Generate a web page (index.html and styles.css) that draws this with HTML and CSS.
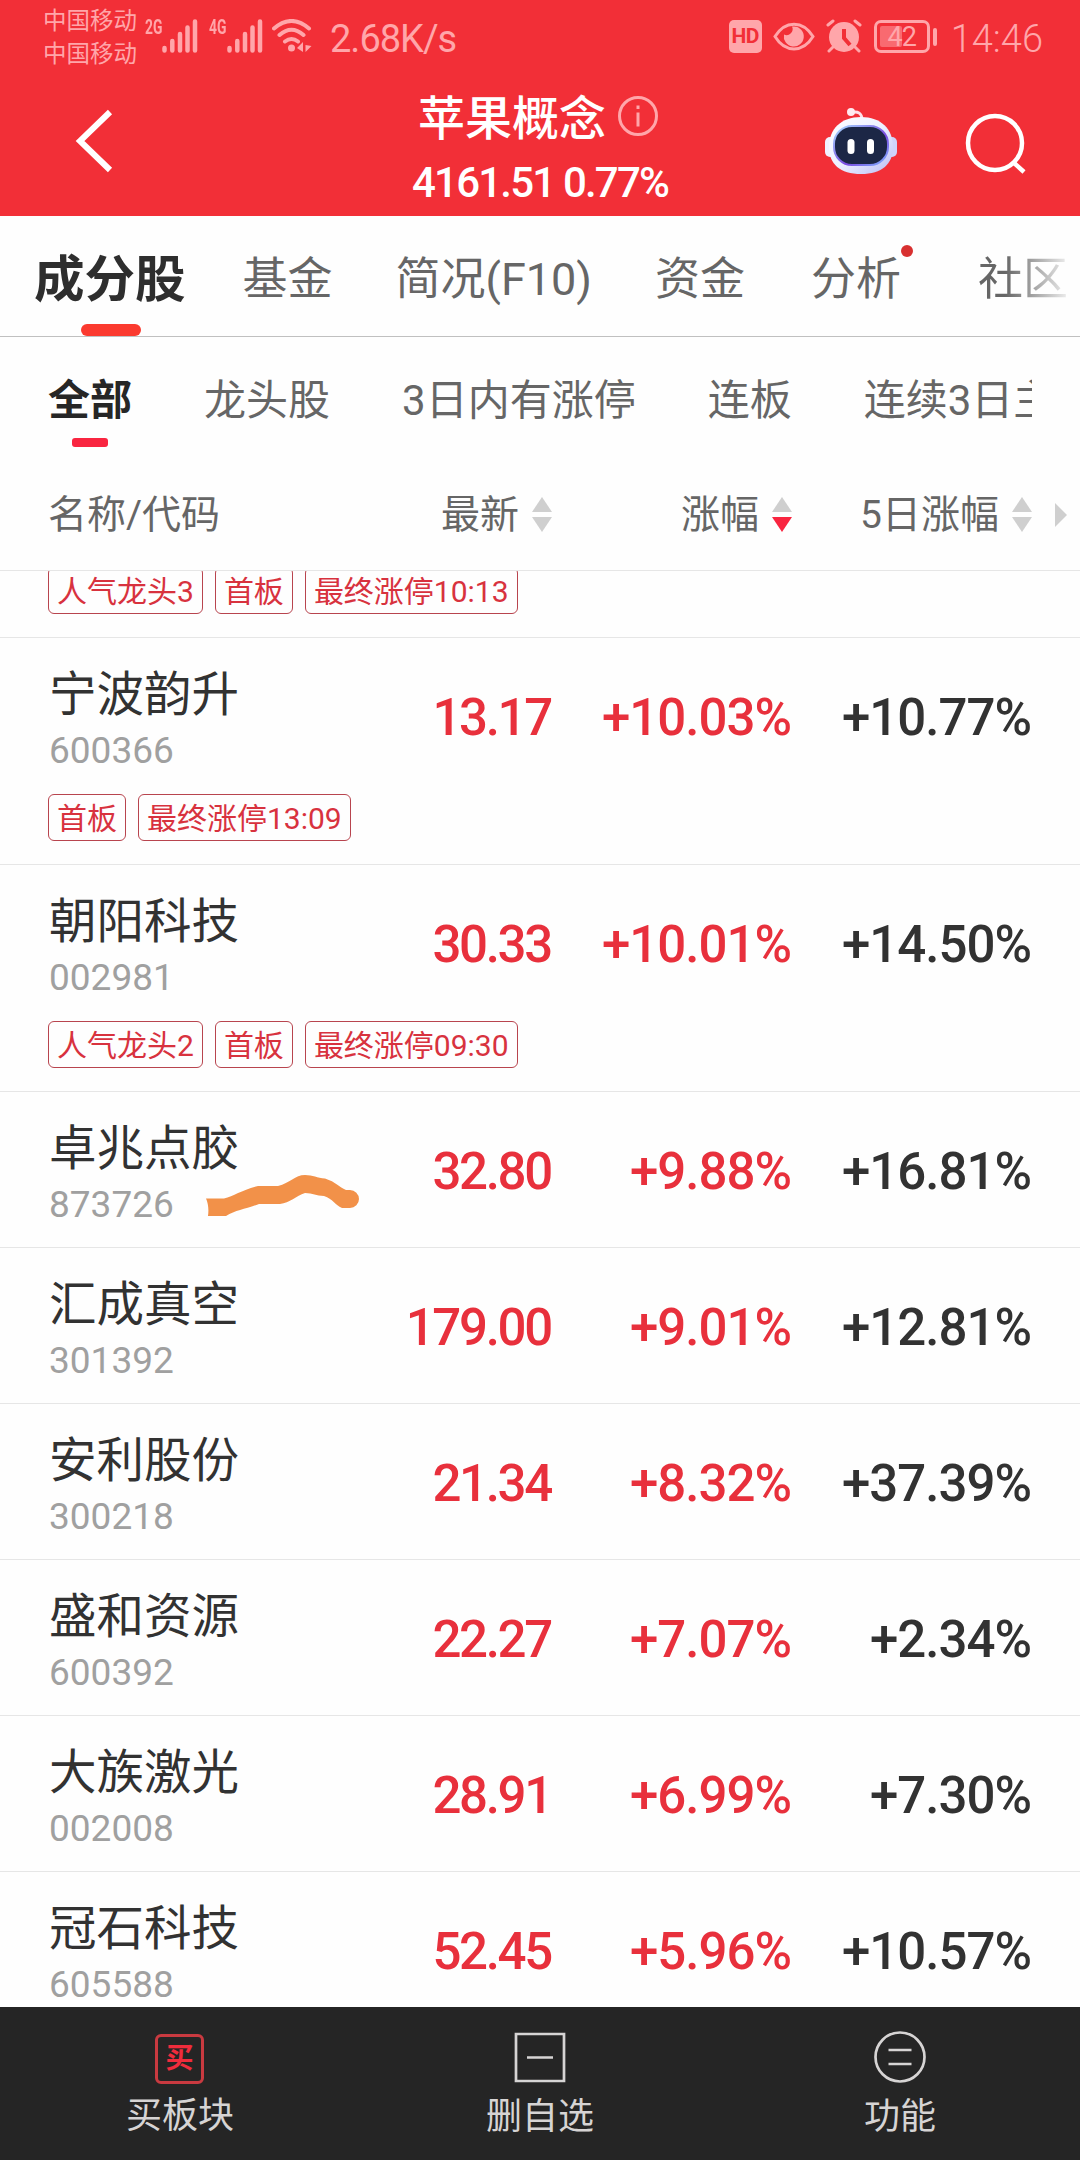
FILE: index.html
```html
<!DOCTYPE html>
<html lang="zh-CN">
<head>
    <meta charset="UTF-8">
    <title>苹果概念</title>
    <link rel="stylesheet" href="styles.css">
</head>
<body>
    <header class="top">
        <div class="status-bar">
            <div class="carriers">
                <span>中国移动</span>
                <span>中国移动</span>
            </div>
            <span class="net">2G</span>
            <svg class="signal" width="36" height="34" viewBox="0 0 36 34">
                <path d="M2.5 29v2.5M10.3 22v9.500M18 15v16.500M25.500 8.500v23M33 2.500v29"/>
            </svg>
            <span class="net net-4g">4G</span>
            <svg class="signal" width="36" height="34" viewBox="0 0 36 34">
                <path d="M2.5 29v2.5M10.3 22v9.500M18 15v16.500M25.500 8.500v23M33 2.500v29"/>
            </svg>
            <svg class="wifi" width="40" height="34" viewBox="0 0 40 34">
                <path class="arc" d="M2 9.500Q19.500-5.500 37 9.500M7.500 16Q19.500 5.500 31.500 16M13 22.500Q19.500 17.500 26 22.500"/>
                <circle cx="19.500" cy="29" r="3.500"/>
                <path d="M31 23v10l-6-4zM33.500 26v7l6-6z"/>
            </svg>
            <span class="speed">2.68K/s</span>
            <div class="status-right">
                <span class="hd">HD</span>
                <svg width="42" height="34" viewBox="0 0 42 34">
                    <path class="line" d="M2 17.500C12 1 30 1 40 17.500C30 34 12 34 2 17.500Z"/>
                    <path d="M21 7.500a10 10 0 1 1-10 8a6 6 0 0 0 8-8z"/>
                </svg>
                <svg width="36" height="34" viewBox="0 0 36 34">
                    <circle cx="18" cy="18" r="15"/>
                    <path class="line" d="M2 6l5-4M34 6l-5-4M7 28l-4 4M29 28l4 4"/>
                    <path class="hand" d="M18 10v9l6 7"/>
                </svg>
                <div class="battery"><span class="battery-fill"></span><b>42</b></div>
                <span class="battery-nub"></span>
                <span class="clock">14:46</span>
            </div>
        </div>
        <div class="nav-bar">
            <svg class="back" width="40" height="64" viewBox="0 0 40 64">
                <path d="M36 3L6 32L36 61"/>
            </svg>
            <div class="title-box">
                <div class="title">苹果概念
                    <svg width="40" height="40" viewBox="0 0 40 40">
                        <circle cx="20" cy="20" r="18.500"/>
                        <path d="M20 16.500v14M20 9.500v3.500"/>
                    </svg>
                </div>
                <div class="index">4161.51 0.77%</div>
            </div>
            <svg class="robot" width="74" height="68" viewBox="0 0 74 68">
                <defs>
                    <linearGradient id="shell" x1="0" y1="0" x2="1" y2="1">
                        <stop offset="0" stop-color="#fff"/>
                        <stop offset=".5" stop-color="#eef0ff"/>
                        <stop offset="1" stop-color="#b9bdf5"/>
                    </linearGradient>
                    <linearGradient id="rim" x1="0" y1="0" x2="1" y2="1">
                        <stop offset="0" stop-color="#a8dcff"/>
                        <stop offset=".6" stop-color="#7a4be0"/>
                        <stop offset="1" stop-color="#7fb4ff"/>
                    </linearGradient>
                </defs>
                <path d="M27 5.500Q38 3 38 13" fill="none" stroke="#ffdfe8" stroke-width="3"/>
                <circle cx="27" cy="5" r="4" fill="#ffeaf0"/>
                <rect x="1" y="30" width="12" height="20" rx="5" fill="#f1f1ff"/>
                <rect x="61" y="30" width="12" height="20" rx="5" fill="#cfd3fb"/>
                <path d="M37 10C57 10 69 22 69 40C69 57 58 67 37 67S5 57 5 40C5 22 17 10 37 10Z" fill="url(#shell)"/>
                <rect x="10" y="19" width="54" height="39" rx="18" fill="#1c2746" stroke="url(#rim)" stroke-width="2"/>
                <rect x="23.500" y="32" width="7" height="15" rx="3.500" fill="#fff"/>
                <rect x="43" y="32" width="7" height="15" rx="3.500" fill="#fff"/>
            </svg>
            <svg class="search" width="62" height="62" viewBox="0 0 62 62">
                <circle cx="30" cy="30" r="27"/>
                <path d="M48 49L59 59"/>
            </svg>
        </div>
    </header>

    <nav class="tabs">
        <span class="tab active">成分股</span>
        <span class="tab">基金</span>
        <span class="tab">简况(F10)</span>
        <span class="tab">资金</span>
        <span class="tab dot">分析</span>
        <span class="tab fade">社区</span>
    </nav>

    <nav class="filters">
        <span class="filter active">全部</span>
        <span class="filter">龙头股</span>
        <span class="filter">3日内有涨停</span>
        <span class="filter">连板</span>
        <span class="filter">连续3日主</span>
    </nav>

    <div class="table-head cols">
        <span>名称/代码</span>
        <span class="sort">最新<i class="arrows"></i></span>
        <span class="sort">涨幅<i class="arrows down"></i></span>
        <span class="sort">5日涨幅<i class="arrows"></i></span>
        <i class="more"></i>
    </div>

    <main class="list">
        <div class="row cut">
            <div class="tags"><span>人气龙头3</span><span>首板</span><span>最终涨停10:13</span></div>
        </div>
        <div class="row">
            <div class="cols">
                <div class="stock"><h2>宁波韵升</h2><p>600366</p></div>
                <b class="price">13.17</b><b class="red">+10.03%</b><b>+10.77%</b>
            </div>
            <div class="tags"><span>首板</span><span>最终涨停13:09</span></div>
        </div>
        <div class="row">
            <div class="cols">
                <div class="stock"><h2>朝阳科技</h2><p>002981</p></div>
                <b class="price">30.33</b><b class="red">+10.01%</b><b>+14.50%</b>
            </div>
            <div class="tags"><span>人气龙头2</span><span>首板</span><span>最终涨停09:30</span></div>
        </div>
        <div class="row">
            <div class="cols">
                <div class="stock"><h2>卓兆点胶</h2><p>873726</p></div>
                <b class="price">32.80</b><b class="red">+9.88%</b><b>+16.81%</b>
            </div>
            <svg class="marker" width="156" height="46" viewBox="0 0 156 46">
                <path d="M2 24.500H20C30 22 38 16 54 12H74C86 9 91 1 101 1C109 1 113 4 121 4.500C132 8 135 13 142 16H146A9 9 0 0 1 146 34H138C131 31 129 25 120 22C112 22 109 19 101 19C92 22 86 29 76 30H55C42 35 32 36 22 42H4C5 35 4 29 2 24.500Z"/>
            </svg>
        </div>
        <div class="row">
            <div class="cols">
                <div class="stock"><h2>汇成真空</h2><p>301392</p></div>
                <b class="price">179.00</b><b class="red">+9.01%</b><b>+12.81%</b>
            </div>
        </div>
        <div class="row">
            <div class="cols">
                <div class="stock"><h2>安利股份</h2><p>300218</p></div>
                <b class="price">21.34</b><b class="red">+8.32%</b><b>+37.39%</b>
            </div>
        </div>
        <div class="row">
            <div class="cols">
                <div class="stock"><h2>盛和资源</h2><p>600392</p></div>
                <b class="price">22.27</b><b class="red">+7.07%</b><b>+2.34%</b>
            </div>
        </div>
        <div class="row">
            <div class="cols">
                <div class="stock"><h2>大族激光</h2><p>002008</p></div>
                <b class="price">28.91</b><b class="red">+6.99%</b><b>+7.30%</b>
            </div>
        </div>
        <div class="row">
            <div class="cols">
                <div class="stock"><h2>冠石科技</h2><p>605588</p></div>
                <b class="price">52.45</b><b class="red">+5.96%</b><b>+10.57%</b>
            </div>
        </div>
    </main>

    <footer class="bottom-bar">
        <div class="action buy">
            <span class="buy-icon">买</span>
            <span>买板块</span>
        </div>
        <div class="action">
            <svg width="52" height="52" viewBox="0 0 52 52">
                <path d="M2 3H50V50H2ZM13 26.500H39"/>
            </svg>
            <span>删自选</span>
        </div>
        <div class="action">
            <svg width="52" height="52" viewBox="0 0 52 52">
                <circle cx="26" cy="26" r="24.500"/>
                <path d="M14.500 19H37.500M14.500 33H37.500"/>
            </svg>
            <span>功能</span>
        </div>
    </footer>
</body>
</html>
```
FILE: styles.css
```css
* {
    box-sizing: border-box;
}

body {
    margin: 0;
    width: 1080px;
    height: 2160px;
    display: flex;
    flex-direction: column;
    overflow: hidden;
    background-color: #fefefe;
    font-family: Roboto, "Noto Sans CJK SC", sans-serif;
    color: #323232;
    white-space: nowrap;
}

h2, p {
    margin: 0;
    font-weight: 400;
}

svg {
    display: block;
    flex: none;
}

/* header */
.top {
    height: 216px;
    flex: none;
    background-color: #f22f37;
    color: #fff;
}

.status-bar {
    height: 72px;
    display: flex;
    align-items: flex-start;
    padding: 0 37px 0 43px;
    color: #ffa6aa;
}

.status-bar svg {
    margin-top: 19px;
    fill: #ffa6aa;
}

.carriers {
    display: flex;
    flex-direction: column;
    width: 102px;
    padding-top: 5px;
    font-size: 23.5px;
    line-height: 33px;
}

.net {
    width: 17px;
    margin-top: 15px;
    font-size: 21px;
    line-height: 24px;
    font-weight: 700;
    transform: scaleX(.66);
    transform-origin: left;
}

.net-4g {
    margin-left: 11px;
    width: 18px;
}

.status-bar .signal, .status-bar .line, .status-bar .arc {
    fill: none;
    stroke: #ffa6aa;
    stroke-width: 4.5;
    stroke-linecap: round;
}

.status-bar .line {
    stroke-width: 3;
}

.status-bar .arc {
    stroke-width: 4;
}

.wifi {
    margin-left: 9px;
}

.speed {
    margin: 17px 0 0 18px;
    font-size: 38px;
    line-height: 45px;
    letter-spacing: -1px;
}

.status-right {
    margin-left: auto;
    display: flex;
    align-items: flex-start;
}

.hd {
    width: 33px;
    height: 33px;
    margin: 20px 11px 0 0;
    border-radius: 5px;
    background-color: #ffa6aa;
    color: #f22f37;
    font-size: 21px;
    font-weight: 700;
    line-height: 33px;
    text-align: center;
    letter-spacing: -.5px;
}

.status-right svg + svg {
    margin-left: 11px;
}

.hand {
    fill: none;
    stroke: #f22f37;
    stroke-width: 4;
}

.battery {
    position: relative;
    width: 56px;
    height: 33px;
    margin: 20px 0 0 12px;
    border: 3px solid #ffa6aa;
    border-radius: 7px;
    text-align: center;
}

.battery b {
    position: relative;
    font-size: 27px;
    font-weight: 400;
    line-height: 28px;
    letter-spacing: -1px;
    vertical-align: top;
}

.battery-fill {
    position: absolute;
    left: 3px;
    top: 3px;
    width: 22px;
    height: 21px;
    border-radius: 2px;
    background-color: #f96a70;
}

.battery-nub {
    width: 4px;
    height: 18px;
    margin: 28px 14px 0 3px;
    border-radius: 2px;
    background-color: #ffa6aa;
}

.clock {
    margin-top: 17px;
    font-size: 38px;
    line-height: 45px;
    font-weight: 300;
}

.nav-bar {
    height: 144px;
    display: flex;
    align-items: flex-start;
    padding: 0 53px 0 74px;
}

.back {
    margin-top: 37px;
    fill: none;
    stroke: #fff;
    stroke-width: 6;
}

.title-box {
    width: 264px;
    margin: 19px 0 0 298px;
}

.title {
    display: flex;
    align-items: center;
    gap: 12px;
    padding-left: 6px;
    font-size: 47px;
    line-height: 56px;
    font-weight: 500;
}

.title svg {
    margin-top: -6px;
    fill: none;
    stroke: #ffa6aa;
    stroke-width: 3;
}

.index {
    font-size: 42px;
    line-height: 50px;
    margin-top: 11px;
    font-weight: 500;
    letter-spacing: -1.8px;
}

.robot {
    margin: 35px 0 0 148px;
}

.search {
    margin: 41px 0 0 auto;
    fill: none;
    stroke: #fff;
    stroke-width: 4.5;
}

/* tabs */
.tabs {
    height: 121px;
    flex: none;
    display: flex;
    gap: 63px;
    padding: 28px 0 0 34px;
    border-bottom: 1px solid #c0c0c0;
    font-size: 45px;
    line-height: 72px;
    color: #666;
}

.tab {
    position: relative;
}

.tab.active {
    margin-right: -6px;
    font-size: 50.5px;
    font-weight: 700;
    color: #2e2e2e;
}

.tab.active::after, .filter.active::after {
    content: "";
    position: absolute;
    left: 50%;
    top: 80px;
    width: 60px;
    height: 12px;
    margin-left: -29px;
    border-radius: 6px;
    background-color: #fb3a2f;
}

.dot {
    margin-left: 3px;
}

.dot::after {
    content: "";
    position: absolute;
    right: -12px;
    top: 1px;
    width: 12px;
    height: 12px;
    border-radius: 50%;
    background-color: #d83030;
}

.fade {
    margin-left: 14px;
    background: linear-gradient(90deg, #666 30%, #eee);
    background-clip: text;
    -webkit-background-clip: text;
    color: transparent;
}

.filters {
    height: 125px;
    flex: none;
    display: flex;
    gap: 72px;
    width: 1032px;
    padding: 34px 0 0 48px;
    overflow: hidden;
    font-size: 42px;
    line-height: 60px;
    color: #666;
}

.filter {
    position: relative;
}

.filter.active {
    font-weight: 700;
    color: #262626;
}

.filter.active::after {
    top: 67px;
    width: 36px;
    height: 9px;
    margin-left: -18px;
    border-radius: 3px;
    background-color: #f92540;
}

/* stock table */
.cols {
    display: grid;
    grid-template-columns: 264px 240px 240px 240px;
    align-items: center;
    padding: 0 48px;
}

.table-head {
    position: relative;
    height: 109px;
    flex: none;
    padding-bottom: 10px;
    border-bottom: 1px solid #e6e6e6;
    font-size: 39px;
    color: #666;
}

.sort {
    display: flex;
    align-items: center;
    justify-content: flex-end;
    gap: 13px;
}

.arrows {
    height: 35px;
    margin-top: 6px;
    display: flex;
    flex-direction: column;
    justify-content: space-between;
}

.arrows::before, .arrows::after {
    content: "";
    border: 10px solid transparent;
    border-bottom: 15px solid #cfcfcf;
    border-top: 0;
}

.arrows::after {
    border-top: 15px solid #cfcfcf;
    border-bottom: 0;
}

.arrows.down::after {
    border-top-color: #f92540;
}

.more {
    position: absolute;
    right: 13px;
    top: 41px;
    border: 12px solid transparent;
    border-left-color: #cfcfcf;
    border-right: 0;
}

.list {
    flex: 1;
    min-height: 0;
    overflow: hidden;
}

.row {
    position: relative;
    border-bottom: 1px solid #e6e6e6;
}

.row .cols {
    height: 155px;
    padding-top: 3px;
}

.row.cut {
    margin-top: -4px;
}

.stock {
    padding: 5px 0 0 1px;
}

.stock h2 {
    font-size: 47.5px;
    line-height: 56px;
}

.stock p {
    margin-top: 6px;
    font-size: 37px;
    line-height: 44px;
    color: #a0a0a0;
}

.row b {
    font-size: 51px;
    font-weight: 500;
    letter-spacing: -1px;
    text-align: right;
    padding-right: 1px;
}

.row .red {
    color: #e8303c;
}

.row .price {
    color: #e8303c;
    letter-spacing: -2.3px;
}

.tags {
    display: flex;
    gap: 12px;
    padding: 1px 48px 23px;
}

.cut .tags {
    padding-top: 0;
}

.tags span {
    height: 47px;
    padding: 1px 8px 0;
    border: 1px solid #b8444e;
    border-radius: 6px;
    font-size: 30px;
    line-height: 46px;
    color: #d8323e;
}

/* hand-drawn highlight */
.marker {
    position: absolute;
    left: 204px;
    top: 82px;
    fill: #f29149;
}

.bottom-bar {
    height: 153px;
    flex: none;
    display: flex;
    background-color: #252525;
}

.action {
    flex: 1;
    display: flex;
    flex-direction: column;
    align-items: center;
    padding-top: 24px;
    font-size: 36px;
    line-height: 48px;
    color: #d6d4d4;
}

.action svg {
    margin-bottom: 10px;
    fill: none;
    stroke: #d6d4d4;
    stroke-width: 2.7;
}

.buy-icon {
    width: 49px;
    height: 50px;
    margin: 3px 0 8px -1px;
    border: 3px solid #c93a40;
    border-radius: 6px;
    font-size: 28px;
    font-weight: 700;
    line-height: 44px;
    text-align: center;
    color: #f02c3c;
}
```
